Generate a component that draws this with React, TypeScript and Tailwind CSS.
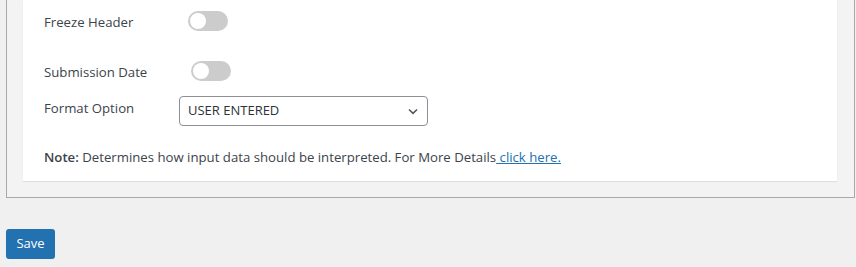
import React from "react";

function Toggle() {
  return (
    <span className="relative inline-flex h-5 w-10 shrink-0 items-center rounded-full bg-[#cccccc]">
      <span className="ml-[2px] h-4 w-4 rounded-full bg-white" />
    </span>
  );
}

export default function App() {
  return (
    <div
      className="h-[267px] w-full overflow-hidden bg-[#f0f0f1] text-[#3c434a]"
      style={{ fontFamily: '"Open Sans", "Noto Sans", sans-serif' }}
    >
      {/* Settings box */}
      <div className="ml-[6px] mr-[1px] border-x border-b border-[#a7aaad] bg-[#f3f3f3] px-4 pb-4">
        <div className="mr-[1px] bg-white pb-[14px] pl-[21px] pt-[11px] shadow-[0_1px_1px_rgba(0,0,0,0.08)]">
          <div className="flex h-5 items-center">
            <span className="w-[144px] pt-[2px] text-[13.2px] leading-5">Freeze Header</span>
            <Toggle />
          </div>

          <div className="mt-[30px] flex h-5 items-center">
            <span className="w-[147px] pt-[2px] text-[13.2px] leading-5">Submission Date</span>
            <Toggle />
          </div>

          <div className="mt-[15px] flex items-start">
            <span className="mt-[2px] w-[135px] text-[13.2px] leading-5">Format Option</span>
            <div className="flex h-[30px] w-[249px] items-center justify-between rounded-[4px] border border-[#8c8f94] bg-white pl-2 pr-[9px]">
              <span className="text-[13px] text-[#2c3338]">USER ENTERED</span>
              <svg width="10" height="7" viewBox="0 0 10 7" fill="none">
                <path d="M1 1.5L5 5.3L9 1.5" stroke="#50575e" strokeWidth="1.6" />
              </svg>
            </div>
          </div>

          <p className="mt-[21px] text-[13.2px] leading-5">
            <strong className="font-semibold">Note:</strong> Determines how input data should be
            interpreted. For More Details
            <a className="text-[#2271b1] underline"> click here.</a>
          </p>
        </div>
      </div>

      <button className="ml-[6px] mt-[31px] h-[30px] w-[49px] rounded-[3px] bg-[#2271b1] text-[13px] text-white">
        Save
      </button>
    </div>
  );
}
